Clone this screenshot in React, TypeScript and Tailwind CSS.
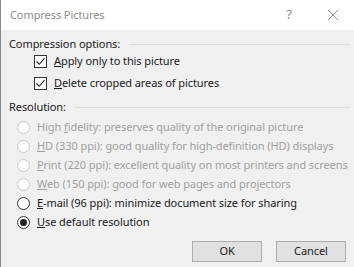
import React from "react";

function Check() {
  return (
    <span className="w-[13px] h-[13px] border border-[#333] bg-white flex items-center justify-center shrink-0">
      <svg width="11" height="11" viewBox="0 0 11 11">
        <path d="M1.5 5.5 L4.3 8.3 L9.5 2.2" fill="none" stroke="#222" strokeWidth="1.1" />
      </svg>
    </span>
  );
}

function Radio({ on, disabled }: { on?: boolean; disabled?: boolean }) {
  return (
    <span
      className={
        "w-[13px] h-[13px] rounded-full border bg-white flex items-center justify-center shrink-0 " +
        (disabled ? "border-[#c8c8c8]" : "border-[#333]")
      }
    >
      {on && <span className="w-[7px] h-[7px] rounded-full bg-[#222]" />}
    </span>
  );
}

export default function App() {
  const res = [
    { k: "H", pre: "High ", u: "f", rest: "idelity: preserves quality of the original picture", dis: true },
    { k: "HD", pre: "", u: "H", rest: "D (330 ppi): good quality for high-definition (HD) displays", dis: true },
    { k: "P", pre: "", u: "P", rest: "rint (220 ppi): excellent quality on most printers and screens", dis: true },
    { k: "W", pre: "", u: "W", rest: "eb (150 ppi): good for web pages and projectors", dis: true },
    { k: "E", pre: "", u: "E", rest: "-mail (96 ppi): minimize document size for sharing", dis: false },
    { k: "U", pre: "", u: "U", rest: "se default resolution", dis: false, on: true },
  ];

  return (
    <div className="w-[354px] h-[267px] bg-[#f0f0f0] text-[11px] tracking-[-0.08px] text-[#1a1a1a] font-['Noto_Sans',sans-serif] flex flex-col border-l border-[#8a8a8a] overflow-hidden">
      <div className="h-[30px] bg-white flex items-center pl-[9px] shrink-0">
        <span className="text-[11px] text-[#8c8c8c] flex-1">Compress Pictures</span>
        <span className="text-[13px] text-[#8c8c8c] w-[20px] mr-[28px] text-center">?</span>
        <svg width="12" height="12" viewBox="0 0 12 12" className="mr-[15px]">
          <path d="M1 1 L11 11 M11 1 L1 11" stroke="#8c8c8c" strokeWidth="1" />
        </svg>
      </div>

      <div className="flex items-center pl-[8px] pr-[4px] mt-[6px] h-[16px]">
        <span>Compression options:</span>
        <span className="flex-1 h-px bg-[#dcdcdc] ml-[9px]" />
      </div>
      <div className="flex flex-col pl-[33px] mt-[3px] gap-[9px]">
        <label className="flex items-center gap-[7px] h-[13px]">
          <Check />
          <span><u>A</u>pply only to this picture</span>
        </label>
        <label className="flex items-center gap-[7px] h-[13px]">
          <Check />
          <span><u>D</u>elete cropped areas of pictures</span>
        </label>
      </div>

      <div className="flex items-center pl-[8px] pr-[4px] mt-[9px] h-[16px]">
        <span>Resolution:</span>
        <span className="flex-1 h-px bg-[#dcdcdc] ml-[9px]" />
      </div>
      <div className="flex flex-col pl-[16px] mt-[6px] gap-[6px]">
        {res.map((r) => (
          <label key={r.k} className={"flex items-center gap-[7px] h-[13px] " + (r.dis ? "text-[#a0a0a0]" : "")}>
            <Radio on={r.on} disabled={r.dis} />
            <span className="whitespace-nowrap">
              {r.pre}
              <u>{r.u}</u>
              {r.rest}
            </span>
          </label>
        ))}
      </div>

      <div className="flex justify-end gap-[14px] pr-[8px] mt-[12px]">
        <button className="w-[70px] h-[21px] bg-[#e1e1e1] border border-[#adadad]">OK</button>
        <button className="w-[70px] h-[21px] bg-[#e1e1e1] border border-[#adadad]">Cancel</button>
      </div>
    </div>
  );
}
